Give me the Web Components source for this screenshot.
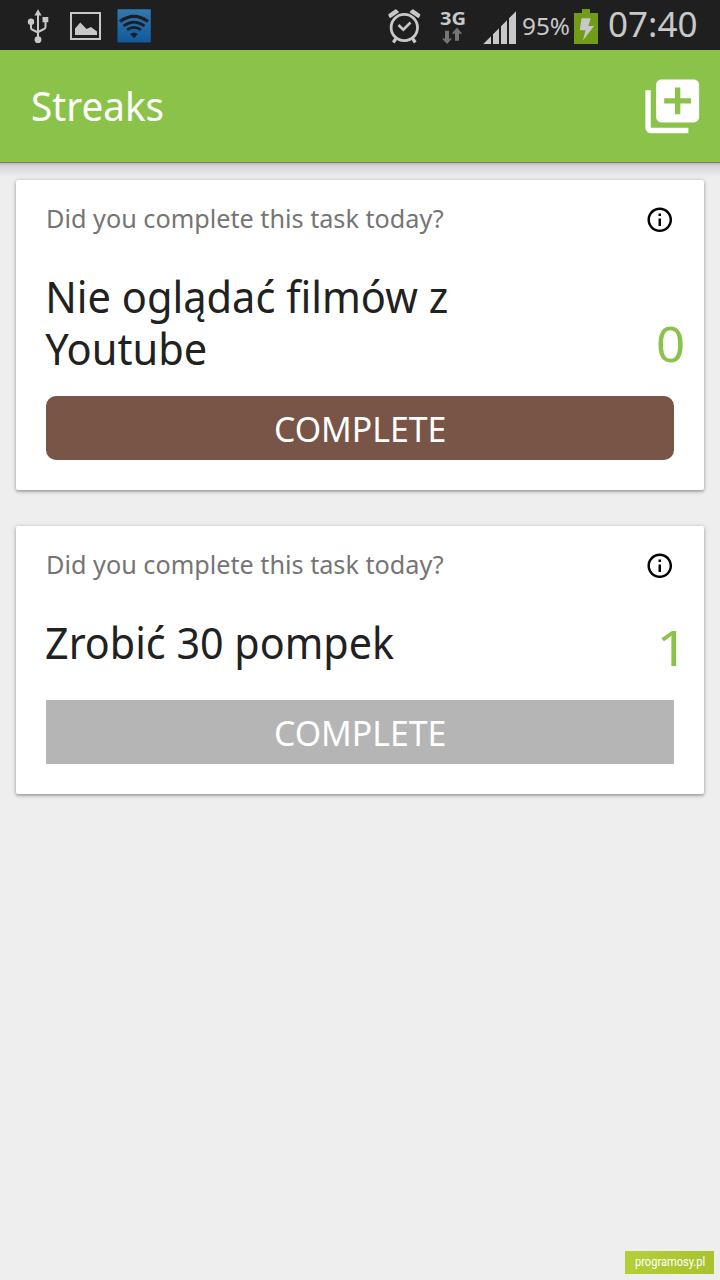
<!DOCTYPE html>
<html lang="pl">
<head>
<meta charset="utf-8">
<title>Streaks</title>
<style>
html,body{margin:0;height:100%;background:#eee;font-family:"Noto Sans","Open Sans",sans-serif;overflow:hidden}
</style>
</head>
<body>
<streaks-app></streaks-app>
<script>
const define = (name, html, init) => {
  const t = document.createElement('template');
  t.innerHTML = html;
  customElements.define(name, class extends HTMLElement {
    connectedCallback() {
      if (this.shadowRoot) return;
      this.attachShadow({mode: 'open'}).append(t.content.cloneNode(true));
      if (init) init(this, this.shadowRoot);
    }
  });
};

// Text whose first line's glyphs span exactly the given width.
define('fit-text', `<style>
:host{display:block;flex:none;white-space:pre}
span{display:inline-block;vertical-align:top;transform-origin:0 50%}
</style><span><slot></slot></span>`, (el, root) => {
  const w = +el.getAttribute('w');
  el.style.width = w + 'px';
  const cs = getComputedStyle(el);
  const ctx = document.createElement('canvas').getContext('2d');
  ctx.font = `${cs.fontWeight} ${cs.fontSize} ${cs.fontFamily}`;
  const m = ctx.measureText(el.textContent.split('\n')[0]);
  const k = w / (m.actualBoundingBoxRight + m.actualBoundingBoxLeft);
  root.querySelector('span').style.transform =
    `translateX(${m.actualBoundingBoxLeft * k}px) scaleX(${k})`;
});

define('status-bar', `<style>
:host{display:flex;height:50px;background:#1f1f1f;color:#c8c8c8}
svg{display:block;flex:none}
.net{width:26px;margin-left:18px;display:flex;flex-direction:column;align-items:center}
.net fit-text{font-size:18.5px;font-weight:700;line-height:20px;margin-top:8px;height:19px}
.pct{font-size:24px;line-height:52px;margin-left:7px;margin-right:-1px}
.time{font-size:34px;line-height:49px;margin-left:11px}
</style>
<svg width="180" height="50" viewBox="0 0 180 50">
 <g fill="none" stroke="#c8c8c8" stroke-width="2"><path d="M38 13V38M31 22V28Q31 29.5 33 30L38 32.5M45.500 21V27Q45.500 28.500 44 29L38 32"/></g>
 <g fill="#c8c8c8"><path d="M38 9.300L41.600 15.500H34.400ZM42.500 17H48.300V22.300H42.500Z"/><circle cx="31" cy="21.700" r="3.200"/><circle cx="38" cy="39.700" r="3.400"/></g>
 <rect x="71" y="13" width="29" height="26" fill="none" stroke="#c8c8c8" stroke-width="2"/>
 <path fill="#c8c8c8" d="M75 35V28.500L80.300 22.500L86.500 29L91 27L97 31.500V35Z"/>
 <defs><linearGradient id="b" x2="0" y2="1"><stop stop-color="#3478b0"/><stop offset="1" stop-color="#10599a"/></linearGradient></defs>
 <rect x="117.500" y="9.300" width="33.300" height="33.300" rx="1" fill="url(#b)"/>
 <g fill="none" stroke="#191f24" stroke-width="2.700"><path d="M120 21.500Q134 11.200 148 21.500" stroke-width="3.300"/><path d="M123.500 26Q134 18.400 144.500 26"/><path d="M127 29.900Q134 24.800 141 29.900"/></g>
 <path fill="#191f24" d="M130.300 34Q134 31 137.700 34L134 38.200Z"/>
</svg>
<svg width="241" height="50" viewBox="180 0 241 50">
 <g fill="none" stroke="#c8c8c8"><circle cx="404.300" cy="27.500" r="13.200" stroke-width="2.800"/><path d="M398.500 25L403.300 29.700L410.500 22.500" stroke-width="2.600"/><path d="M396 38.500L393.300 42.500M412.600 38.500L415.300 42.500" stroke-width="3.200"/></g>
 <path fill="#c8c8c8" stroke="#c8c8c8" stroke-width="2" stroke-linejoin="round" d="M390.300 17L389.300 14.800L395.700 10.300L397.800 12ZM418.300 17L419.300 14.800L412.900 10.300L410.800 12Z"/>
</svg>
<div class="net"><fit-text w="24.500">3G</fit-text>
 <svg width="24" height="18" viewBox="441 27 24 18" fill="#747474"><path d="M446 30.700H450V38.500H453L448 44L443 38.500H446ZM456 40.700H460V33.800H463.200L458 27.500L452.700 33.800H456Z"/></svg>
</div>
<svg width="51" height="50" viewBox="465 0 51 50" fill="#c8c8c8"><path d="M483.300 44L491 36.300V44ZM493 44V34.300L499 28.300V44ZM501 44V26.300L507 20.300V44ZM509 44V18.300L516 11.300V44Z"/></svg>
<fit-text class="pct" w="46">95%</fit-text>
<svg width="30" height="50" viewBox="568 0 30 50"><path fill="#709d18" d="M574 13H582V9H590V13H598V44H574Z"/><path fill="#c8c8c8" d="M581.500 18.300H590.700L588.300 26H594L583 40.500L585.500 30.300H579.800Z"/></svg>
<fit-text class="time" w="87">07:40</fit-text>`);

define('app-header', `<style>
:host{display:flex;position:relative;height:112px;box-sizing:border-box;padding:0 15.800px 0 33px;background:#8bc34a;color:#fff;font-size:40px;line-height:112px;justify-content:space-between}
svg{display:block;margin-top:23.500px}
i{position:absolute;left:0;right:0;top:112px;height:15px;background:linear-gradient(#777 0 1px,#bbb 1px,#d5d5d5 4px,#e1e1e1 9px,#eee)}
</style>
<fit-text w="130">Streaks</fit-text>
<svg width="64.500" height="64.500" viewBox="0 0 24 24"><path fill="#fff" d="M4 6H2v14c0 1.100.9 2 2 2h14v-2H4V6zm16-4H8c-1.100 0-2 .9-2 2v12c0 1.100.9 2 2 2h12c1.100 0 2-.9 2-2V4c0-1.100-.9-2-2-2zm-1 9h-4v4h-2v-4H9V9h4V5h2v4h4v2z"/></svg><i></i>`);

define('complete-button', `<style>
:host{display:flex;justify-content:center;height:64px;line-height:66px;font-size:34px;color:#fff;background:#795548;border-radius:10px}
:host([done]){background:#b5b5b5;border-radius:0}
</style><fit-text w="168.500">COMPLETE</fit-text>`);

define('streak-card', `<style>
:host{display:block;position:relative;box-sizing:border-box;background:#fff;border-radius:2px;padding:19px 30px 30px;box-shadow:0 1px 4px rgba(0,0,0,.32),0 2px 2px rgba(0,0,0,.12)}
.top{display:flex;justify-content:space-between;height:38px;line-height:38px;font-size:26px;color:#757575;padding-left:1.500px}
svg{display:block;margin:5.500px 0 0}
.body{display:flex;justify-content:space-between;align-items:flex-end;min-height:62px;padding:33px 0 22px}
.name{align-self:flex-start;font-size:43px;line-height:52px;color:#212121;padding-top:.5px;height:51.5px}
:host(:not([done])) .name{height:103.5px}
.count{font-size:50px;line-height:60px;color:#8bc34a;margin:0 -9px 1px 0}
:host([done]) .count{margin-right:-2px}
</style>
<div class="top"><fit-text w="395.500">Did you complete this task today?</fit-text>
<svg width="29.500" height="29.500" viewBox="0 0 24 24"><path d="M11 17h2v-6h-2v6zm1-15C6.480 2 2 6.480 2 12s4.480 10 10 10 10-4.480 10-10S17.520 2 12 2zm0 18c-4.410 0-8-3.590-8-8s3.590-8 8-8 8 3.590 8 8-3.590 8-8 8zM11 9h2V7h-2v2z"/></svg></div>
<div class="body"><div class="name"><slot name="name"></slot></div><div class="count"><slot name="count"></slot></div></div>
<slot name="action"></slot>`);

define('site-badge', `<style>
:host{position:absolute;right:6px;bottom:6px;width:89px;height:23px;display:flex;justify-content:center;background:linear-gradient(100deg,#b5cf38,#a9c22d);color:#fff;font:400 13px/22px Roboto,sans-serif}
</style><fit-text w="70">programosy.pl</fit-text>`);

define('streaks-app', `<style>
:host{display:block;position:relative;width:720px;height:1280px;background:#eee;overflow:hidden}
main{display:flex;flex-direction:column;gap:36px;padding:18px 16px}
.l1{margin-left:2.500px}
</style>
<status-bar></status-bar><app-header></app-header>
<main>
<streak-card>
 <fit-text class="l1" slot="name" w="398">Nie oglądać filmów z
Youtube</fit-text>
 <fit-text slot="count" w="25.500">0</fit-text>
 <complete-button slot="action"></complete-button>
</streak-card>
<streak-card done>
 <fit-text slot="name" w="348">Zrobić 30 pompek</fit-text>
 <fit-text slot="count" w="15.500">1</fit-text>
 <complete-button slot="action" done></complete-button>
</streak-card>
</main>
<site-badge></site-badge>`);
</script>
</body>
</html>
